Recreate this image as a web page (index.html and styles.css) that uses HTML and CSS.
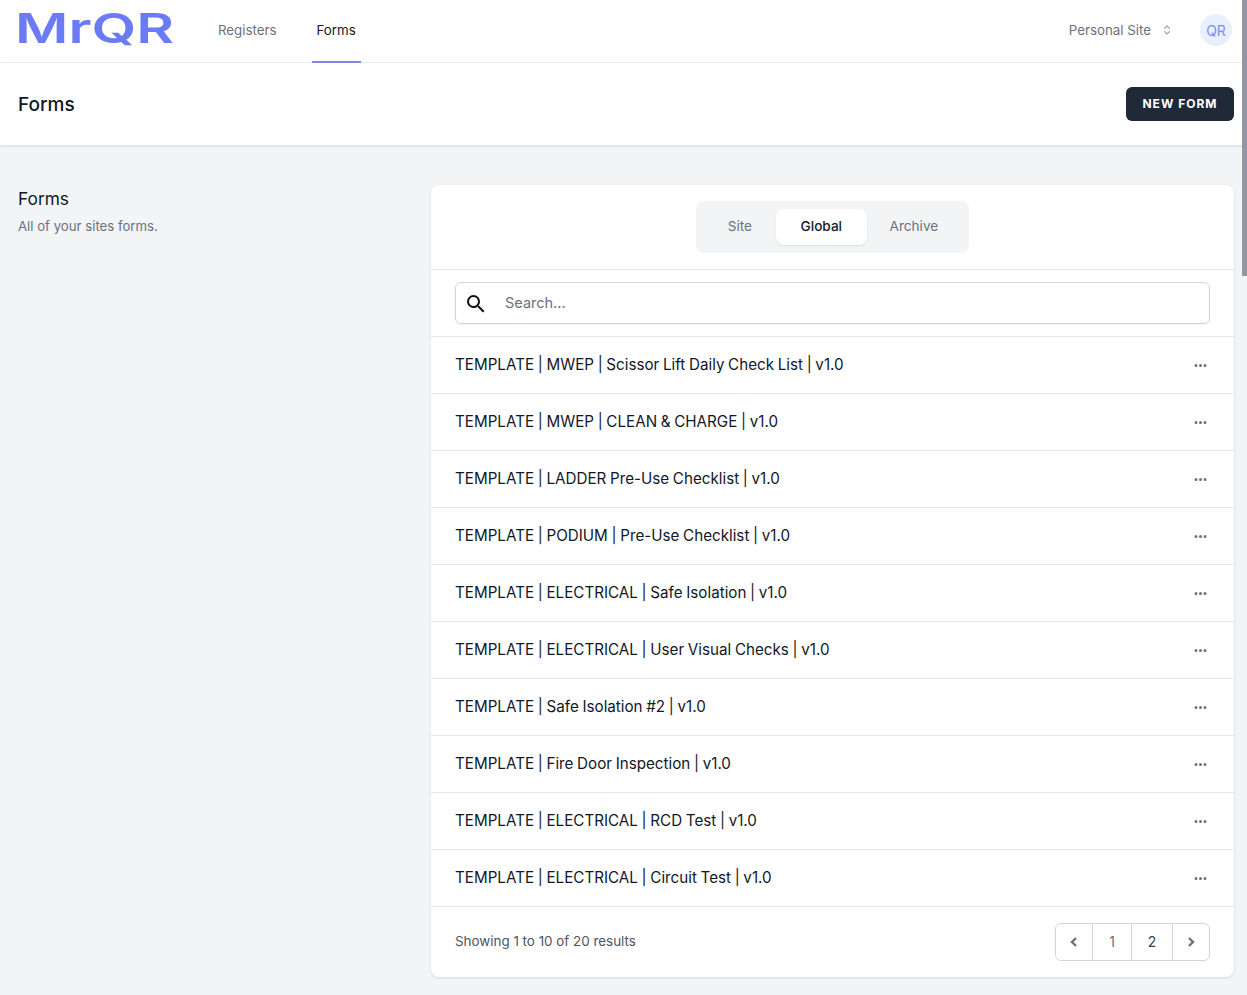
FILE: index.html
```html
<!DOCTYPE html>
<html lang="en">
<head>
    <meta charset="UTF-8">
    <meta name="viewport" content="width=device-width, initial-scale=1.0">
    <title>Forms</title>
    <link rel="stylesheet" href="styles.css">
</head>
<body>
    <nav class="navbar">
        <div class="nav-left">
            <svg class="logo" width="156" height="40" viewBox="0 0 156 40">
                <text x="-3" y="31" textLength="159" lengthAdjust="spacingAndGlyphs">MrQR</text>
            </svg>
            <div class="nav-links">
                <a class="nav-link">Registers</a>
                <a class="nav-link active">Forms</a>
            </div>
        </div>
        <div class="nav-right">
            <span class="site-name">Personal Site</span>
            <svg class="selector" width="16" height="16" viewBox="0 0 20 20" fill="none" stroke="#9ca3af" stroke-width="1.5" stroke-linecap="round" stroke-linejoin="round">
                <path d="M7 8l3-3 3 3M13 12l-3 3-3-3"/>
            </svg>
            <div class="avatar">QR</div>
        </div>
    </nav>

    <header class="page-header">
        <h1>Forms</h1>
        <button class="new-button">New Form</button>
    </header>

    <main class="content">
        <div class="intro">
            <h2>Forms</h2>
            <p>All of your sites forms.</p>
        </div>

        <section class="card">
            <div class="tabs-row">
                <div class="tabs">
                    <a class="tab">Site</a>
                    <a class="tab active">Global</a>
                    <a class="tab archive">Archive</a>
                </div>
            </div>

            <div class="search-row">
                <label class="search">
                    <svg width="24" height="24" viewBox="0 0 24 24" fill="#111">
                        <path d="M15.5 14h-.79l-.28-.27A6.471 6.471 0 0 0 16 9.5 6.5 6.5 0 1 0 9.5 16c1.61 0 3.09-.59 4.23-1.57l.27.28v.79l5 4.99L20.49 19l-4.99-5zm-6 0C7.01 14 5 11.99 5 9.5S7.01 5 9.5 5 14 7.01 14 9.5 11.99 14 9.5 14z"/>
                    </svg>
                    <input type="text" placeholder="Search...">
                </label>
            </div>

            <ul class="form-list">
                <li><span>TEMPLATE | MWEP | Scissor Lift Daily Check List | v1.0</span><svg class="dots" viewBox="0 0 20 20"><path d="M6 10a2 2 0 11-4 0 2 2 0 014 0zM12 10a2 2 0 11-4 0 2 2 0 014 0zM18 10a2 2 0 11-4 0 2 2 0 014 0z"/></svg></li>
                <li><span>TEMPLATE | MWEP | CLEAN &amp; CHARGE | v1.0</span><svg class="dots" viewBox="0 0 20 20"><path d="M6 10a2 2 0 11-4 0 2 2 0 014 0zM12 10a2 2 0 11-4 0 2 2 0 014 0zM18 10a2 2 0 11-4 0 2 2 0 014 0z"/></svg></li>
                <li><span>TEMPLATE | LADDER Pre-Use Checklist | v1.0</span><svg class="dots" viewBox="0 0 20 20"><path d="M6 10a2 2 0 11-4 0 2 2 0 014 0zM12 10a2 2 0 11-4 0 2 2 0 014 0zM18 10a2 2 0 11-4 0 2 2 0 014 0z"/></svg></li>
                <li><span>TEMPLATE | PODIUM | Pre-Use Checklist | v1.0</span><svg class="dots" viewBox="0 0 20 20"><path d="M6 10a2 2 0 11-4 0 2 2 0 014 0zM12 10a2 2 0 11-4 0 2 2 0 014 0zM18 10a2 2 0 11-4 0 2 2 0 014 0z"/></svg></li>
                <li><span>TEMPLATE | ELECTRICAL | Safe Isolation | v1.0</span><svg class="dots" viewBox="0 0 20 20"><path d="M6 10a2 2 0 11-4 0 2 2 0 014 0zM12 10a2 2 0 11-4 0 2 2 0 014 0zM18 10a2 2 0 11-4 0 2 2 0 014 0z"/></svg></li>
                <li><span>TEMPLATE | ELECTRICAL | User Visual Checks | v1.0</span><svg class="dots" viewBox="0 0 20 20"><path d="M6 10a2 2 0 11-4 0 2 2 0 014 0zM12 10a2 2 0 11-4 0 2 2 0 014 0zM18 10a2 2 0 11-4 0 2 2 0 014 0z"/></svg></li>
                <li><span>TEMPLATE | Safe Isolation #2 | v1.0</span><svg class="dots" viewBox="0 0 20 20"><path d="M6 10a2 2 0 11-4 0 2 2 0 014 0zM12 10a2 2 0 11-4 0 2 2 0 014 0zM18 10a2 2 0 11-4 0 2 2 0 014 0z"/></svg></li>
                <li><span>TEMPLATE | Fire Door Inspection | v1.0</span><svg class="dots" viewBox="0 0 20 20"><path d="M6 10a2 2 0 11-4 0 2 2 0 014 0zM12 10a2 2 0 11-4 0 2 2 0 014 0zM18 10a2 2 0 11-4 0 2 2 0 014 0z"/></svg></li>
                <li><span>TEMPLATE | ELECTRICAL | RCD Test | v1.0</span><svg class="dots" viewBox="0 0 20 20"><path d="M6 10a2 2 0 11-4 0 2 2 0 014 0zM12 10a2 2 0 11-4 0 2 2 0 014 0zM18 10a2 2 0 11-4 0 2 2 0 014 0z"/></svg></li>
                <li><span>TEMPLATE | ELECTRICAL | Circuit Test | v1.0</span><svg class="dots" viewBox="0 0 20 20"><path d="M6 10a2 2 0 11-4 0 2 2 0 014 0zM12 10a2 2 0 11-4 0 2 2 0 014 0zM18 10a2 2 0 11-4 0 2 2 0 014 0z"/></svg></li>
            </ul>

            <div class="card-footer">
                <span class="results">Showing 1 to 10 of 20 results</span>
                <div class="pagination">
                    <a class="page-btn prev"><svg width="20" height="20" viewBox="0 0 20 20" fill="none" stroke="#6b7280" stroke-width="2.4"><path d="M12 6l-4 4 4 4"/></svg></a>
                    <a class="page-btn one">1</a>
                    <a class="page-btn two">2</a>
                    <a class="page-btn next"><svg width="20" height="20" viewBox="0 0 20 20" fill="none" stroke="#6b7280" stroke-width="2.4"><path d="M8 6l4 4-4 4"/></svg></a>
                </div>
            </div>
        </section>
    </main>

    <div class="scrollbar"></div>
</body>
</html>
```

FILE: styles.css
```css
html, body {
    height: 100%;
    overflow: hidden;
}

body {
    font-family: Inter, "Liberation Sans", sans-serif;
    margin: 0;
    padding: 0 13px 0 18px;
    background-color: #f3f4f6;
    color: #111827;
    position: relative;
}

.navbar,
.page-header {
    margin: 0 -13px 0 -18px;
    padding: 0 13px 0 18px;
    background: white;
    display: flex;
    justify-content: space-between;
    align-items: center;
}

.navbar {
    height: 62px;
    border-bottom: 1px solid #eceef1;
}

.nav-left {
    display: flex;
    align-items: stretch;
    height: 100%;
}

.logo {
    align-self: center;
    margin-top: 1px;
    overflow: visible;
}

.logo text {
    font-family: Inter, sans-serif;
    font-weight: 600;
    font-size: 41px;
    fill: #6b7af5;
}

.nav-links {
    display: flex;
    margin-left: 40px;
    gap: 31px;
}

.nav-link {
    display: flex;
    align-items: center;
    padding: 0 4px 2px;
    font-size: 13.3px;
    color: #6b7280;
    border-bottom: 2px solid transparent;
    margin-bottom: -1px;
}

.nav-link.active {
    color: #111827;
    padding: 0 5px 2px;
    border-bottom-color: #7f88f2;
}

.nav-right {
    display: flex;
    align-items: center;
    padding-right: 2px;
    padding-bottom: 2px;
}

.site-name {
    font-size: 13.3px;
    color: #6b7280;
}

.selector {
    margin-left: 8px;
}

.avatar {
    width: 32px;
    height: 32px;
    margin-left: 25px;
    border-radius: 50%;
    background-color: #e8f0fe;
    color: #818cf8;
    font-size: 14px;
    display: flex;
    align-items: center;
    justify-content: center;
}

.page-header {
    height: 82px;
    box-shadow: 0 1px 3px rgba(0, 0, 0, 0.12);
    position: relative;
}

h1 {
    margin: 0;
    font-size: 19px;
    font-weight: 500;
}

.new-button {
    width: 108px;
    height: 34px;
    padding: 0 0 1px;
    border: none;
    border-radius: 6px;
    background-color: #1f2937;
    color: white;
    font-family: inherit;
    font-size: 12px;
    font-weight: 700;
    letter-spacing: 1px;
    text-transform: uppercase;
}

.content {
    display: flex;
    align-items: flex-start;
    padding-top: 40px;
}

.intro {
    width: 413px;
    flex-shrink: 0;
}

.intro h2 {
    margin: 2px 0 0;
    font-size: 17.3px;
    line-height: 24px;
    font-weight: 400;
}

.intro p {
    margin: 5px 0 0;
    font-size: 13.2px;
    line-height: 20px;
    color: #6b7280;
}

.card {
    flex: 1;
    background: white;
    border-radius: 8px;
    box-shadow: 0 1px 3px rgba(0, 0, 0, 0.12);
}

.tabs-row {
    display: flex;
    justify-content: center;
    padding: 16px 0;
    border-bottom: 1px solid #e5e7eb;
}

.tabs {
    display: flex;
    padding: 8px;
    border-radius: 8px;
    background-color: #f3f4f6;
}

.tab {
    padding: 0 24px;
    height: 36px;
    line-height: 34px;
    font-size: 13.6px;
    color: #6b7280;
    border-radius: 8px;
}

.tab.active {
    padding: 0 24.5px;
    background: white;
    color: #111827;
    font-weight: 500;
    box-shadow: 0 1px 2px rgba(0, 0, 0, 0.1);
}

.tab.archive {
    padding: 0 23px;
}

.search-row {
    padding: 12px 24px;
    border-bottom: 1px solid #e5e7eb;
}

.search {
    display: flex;
    align-items: center;
    height: 40px;
    padding-left: 8px;
    border: 1px solid #d1d5db;
    border-radius: 6px;
    box-shadow: 0 1px 2px rgba(0, 0, 0, 0.05);
}

.search svg {
    margin-top: 1px;
}

.search input {
    flex: 1;
    margin: 0 0 2px 17px;
    padding: 0;
    border: none;
    outline: none;
    font-family: inherit;
    font-size: 14.5px;
    color: #111827;
}

.search input::placeholder {
    color: #6b7280;
}

.form-list {
    list-style: none;
    padding: 0;
    margin: 0;
}

.form-list li {
    display: flex;
    justify-content: space-between;
    align-items: center;
    height: 56px;
    padding: 0 26px 0 24px;
    border-bottom: 1px solid #e5e7eb;
    font-size: 15.2px;
    word-spacing: -0.6px;
}

.form-list li span {
    margin-bottom: 1px;
}

.dots {
    width: 15px;
    height: 15px;
    fill: #6b7280;
}

.card-footer {
    display: flex;
    justify-content: space-between;
    align-items: center;
    height: 70px;
    padding: 0 24px;
}

.results {
    font-size: 13.4px;
    margin-bottom: 2px;
    color: #4b5563;
}

.pagination {
    display: flex;
    height: 38px;
    box-sizing: border-box;
    border: 1px solid #d1d5db;
    border-radius: 6px;
}

.page-btn {
    display: flex;
    align-items: center;
    justify-content: center;
    font-size: 14px;
    padding-bottom: 1px;
    border-right: 1px solid #d1d5db;
}

.page-btn.prev { width: 36px; }
.page-btn.one { width: 38px; color: #6b7280; }
.page-btn.two { width: 40px; color: #374151; }
.page-btn.next { width: 36px; border-right: none; }

.scrollbar {
    position: fixed;
    top: 0;
    right: 0;
    width: 5px;
    height: 276px;
    background-color: #9497a3;
}
```
